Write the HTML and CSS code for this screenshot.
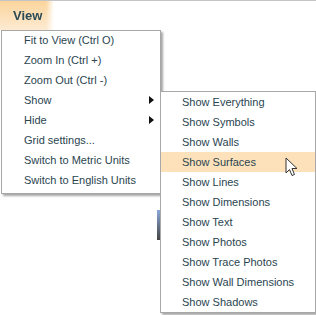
FILE: index.html
```html
<!DOCTYPE html>
<html lang="en">
<head>
  <meta charset="UTF-8">
  <title>View menu</title>
  <link rel="stylesheet" href="styles.css">
</head>
<body>
  <div class="stage">
    <!-- Barre de menu -->
    <div class="menubar">
      <div class="tab">View</div>
    </div>

    <!-- Arrière-plan partiellement visible -->
    <div class="backdrop"></div>

    <!-- Menu principal -->
    <ul class="menu">
      <li>Fit to View (Ctrl O)</li>
      <li>Zoom In (Ctrl +)</li>
      <li>Zoom Out (Ctrl -)</li>
      <li class="has-sub">Show
        <ul class="menu submenu">
          <li>Show Everything</li>
          <li>Show Symbols</li>
          <li>Show Walls</li>
          <li class="active">Show Surfaces
            <svg class="cursor" width="14" height="21" viewBox="0 0 14 21">
              <path d="M1 1 L1 16 L4.5 12.5 L7 18.5 L9.5 17.5 L7 11.5 L12 11.5 Z" fill="#fff" stroke="#333" stroke-width="1"/>
            </svg>
          </li>
          <li>Show Lines</li>
          <li>Show Dimensions</li>
          <li>Show Text</li>
          <li>Show Photos</li>
          <li>Show Trace Photos</li>
          <li>Show Wall Dimensions</li>
          <li>Show Shadows</li>
        </ul>
      </li>
      <li class="has-sub">Hide</li>
      <li>Grid settings...</li>
      <li>Switch to Metric Units</li>
      <li>Switch to English Units</li>
    </ul>
  </div>
</body>
</html>
```

FILE: styles.css
```css
* { box-sizing: border-box; margin: 0; padding: 0; }

body {
  font-family: 'Liberation Sans', Arial, sans-serif;
  font-size: 11px;
  color: #2a4550;
  background: #fff;
  width: 316px;
  height: 315px;
  overflow: hidden;
}

.stage {
  position: relative;
  width: 316px;
  height: 315px;
}

/* Barre de menu */
.menubar {
  height: 30px;
  border-top: 1px solid #c4c4c4;
}
.tab {
  width: 54px;
  height: 29px;
  padding: 7px 0 0 13px;
  font-size: 13px;
  font-weight: bold;
  color: #2a4a56;
  background: linear-gradient(to bottom, #fbd49c, #fdebd2);
  -webkit-mask-image: linear-gradient(to right, #000 85%, transparent);
}

/* Bouts de contenu derrière le menu */
.backdrop {
  position: absolute;
  left: 157px;
  top: 210px;
  width: 3px;
  height: 30px;
  background: linear-gradient(to bottom, #8aa8d8, #444);
}

/* Menus */
.menu {
  list-style: none;
  position: absolute;
  left: 1px;
  top: 30px;
  width: 160px;
  padding: 0 0 2px;
  background: #fff;
  border: 1px solid #a8a8a8;
  box-shadow: 2px 2px 2px rgba(0,0,0,0.35);
}
.menu li {
  position: relative;
  height: 20px;
  line-height: 18px;
  padding-left: 22px;
  white-space: nowrap;
}
.has-sub::after {
  content: '';
  position: absolute;
  right: 6px;
  top: 5px;
  border-left: 5px solid #111;
  border-top: 4px solid transparent;
  border-bottom: 4px solid transparent;
}

.submenu {
  left: 158px;
  top: 0;
  width: 156px;
  padding: 0;
  color: #2a4550;
}
.submenu li {
  line-height: 20px;
  padding-left: 21px;
}
.submenu .active {
  background: #fde1bb;
}
.cursor {
  position: absolute;
  left: 124px;
  top: 5px;
}
```
